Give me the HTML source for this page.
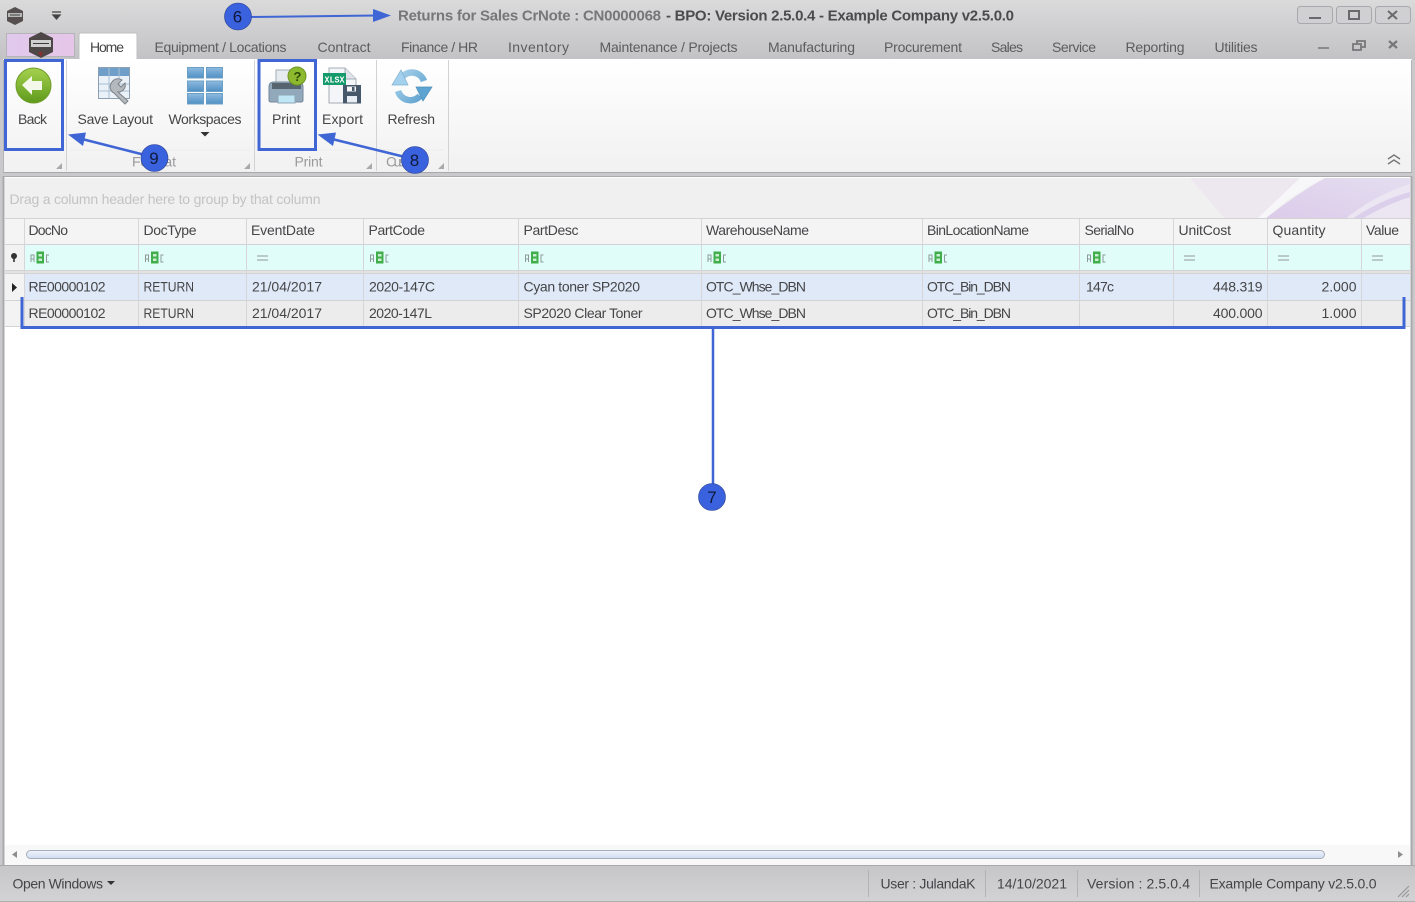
<!DOCTYPE html>
<html><head><meta charset="utf-8"><title>Returns for Sales CrNote</title>
<style>
html,body{margin:0;padding:0;background:#fff;width:1415px;height:902px;overflow:hidden}
svg{display:block;position:absolute;left:0;top:0;filter:blur(.35px)}
text{font-family:"Liberation Sans",sans-serif;font-size:14px;fill:#4a4a4c}
.t{fill:#5c5c5e}
.g{fill:#454548}
.m{fill:#9a9a9c}
.n{font-family:"Liberation Sans",sans-serif;font-size:17px;fill:#10193a;text-anchor:middle}
</style></head><body>
<svg width="1415" height="902" viewBox="0 0 1415 902" xmlns="http://www.w3.org/2000/svg">
<defs>
<linearGradient id="chrome" x1="0" y1="0" x2="0" y2="1"><stop offset="0" stop-color="#dadadb"/><stop offset="1" stop-color="#c2c2c5"/></linearGradient>
<linearGradient id="status" x1="0" y1="0" x2="0" y2="1"><stop offset="0" stop-color="#c6c6c9"/><stop offset="1" stop-color="#d3d3d5"/></linearGradient>
<linearGradient id="rib" x1="0" y1="0" x2="0" y2="1"><stop offset="0" stop-color="#ffffff"/><stop offset="1" stop-color="#f1f1f2"/></linearGradient>
<linearGradient id="app" x1="0" y1="0" x2="1" y2="0"><stop offset="0" stop-color="#e0c9ec"/><stop offset="1" stop-color="#e6c6e8"/></linearGradient>
<linearGradient id="gb" x1="0" y1="0" x2="0" y2="1"><stop offset="0" stop-color="#a5d24e"/><stop offset="1" stop-color="#5f9a1c"/></linearGradient>
<linearGradient id="blk" x1="0" y1="0" x2="0" y2="1"><stop offset="0" stop-color="#8fbbdf"/><stop offset="1" stop-color="#4f8fc4"/></linearGradient>
<linearGradient id="sb" x1="0" y1="0" x2="0" y2="1"><stop offset="0" stop-color="#f0f4fb"/><stop offset="1" stop-color="#cfdcf2"/></linearGradient>
<linearGradient id="ref" gradientUnits="userSpaceOnUse" x1="392" y1="70" x2="432" y2="102"><stop offset="0" stop-color="#b5dbf0"/><stop offset="1" stop-color="#4f97c9"/></linearGradient>
<linearGradient id="swoosh" x1="0" y1="1" x2="1" y2="0"><stop offset="0" stop-color="#dccbea"/><stop offset="1" stop-color="#e4def0"/></linearGradient>
</defs>

<!-- chrome -->
<rect width="1415" height="902" fill="#c9c9cc"/>
<rect width="1415" height="60" fill="url(#chrome)"/>

<!-- app icon -->
<path d="M15 7l8 4v10l-8 4-8-4V11z" fill="#55504f"/>
<rect x="8" y="13" width="14" height="4" fill="#b9b9b9"/>
<path d="M10 15h10" stroke="#3f3f3f"/>
<path d="M52 12h9M53 15h7l-3.500 4z" stroke="#444" stroke-width="1.300" fill="#444"/>

<!-- title -->
<text x="398" y="20.500" textLength="263" lengthAdjust="spacing" font-weight="bold" style="fill:#77777a;font-size:15px">Returns for Sales CrNote : CN0000068</text>
<text x="666" y="20.500" textLength="348" lengthAdjust="spacing" font-weight="bold" style="fill:#4b4b4e;font-size:15px">- BPO: Version 2.5.0.4 - Example Company v2.5.0.0</text>

<!-- window buttons -->
<g fill="#d0d0d2" stroke="#a9a9ad"><rect x="1297.500" y="6.500" width="35" height="17" rx="3"/><rect x="1336.500" y="6.500" width="35" height="17" rx="3"/><rect x="1375.500" y="6.500" width="35" height="17" rx="3"/></g>
<rect x="1309" y="17" width="12" height="2" fill="#6a6a6c"/>
<rect x="1349" y="11" width="10" height="8" fill="none" stroke="#6a6a6c" stroke-width="2"/>
<path d="M1388 11l9 8M1397 11l-9 8" stroke="#6a6a6c" stroke-width="2"/>

<!-- app button and tabs -->
<rect x="6.500" y="33.500" width="68" height="23" fill="url(#app)" stroke="#b5b5b9"/>
<path d="M41 32l12 6v14l-12 6-12-6V38z" fill="#4d4847"/>
<rect x="31" y="40" width="20" height="7" fill="#cfcfcf"/>
<path d="M33 43.500h16" stroke="#3b3b3b"/>
<path d="M38 52h5l-2 5z" fill="#8a2f2f"/>
<path d="M79 60V35q0-2 2-2h54q2 0 2 2v25z" fill="#fff" stroke="#c0c0c3"/>
<text class="g" x="90" y="52" textLength="34" lengthAdjust="spacing">Home</text>
<g class="tabs">
<text class="t" x="154.500" y="52" textLength="132" lengthAdjust="spacing">Equipment / Locations</text>
<text class="t" x="317.500" y="52" textLength="53" lengthAdjust="spacing">Contract</text>
<text class="t" x="401" y="52" textLength="77" lengthAdjust="spacing">Finance / HR</text>
<text class="t" x="508" y="52" textLength="61" lengthAdjust="spacing">Inventory</text>
<text class="t" x="599.500" y="52" textLength="138" lengthAdjust="spacing">Maintenance / Projects</text>
<text class="t" x="768" y="52" textLength="87" lengthAdjust="spacing">Manufacturing</text>
<text class="t" x="884" y="52" textLength="78" lengthAdjust="spacing">Procurement</text>
<text class="t" x="991" y="52" textLength="32" lengthAdjust="spacing">Sales</text>
<text class="t" x="1052" y="52" textLength="44" lengthAdjust="spacing">Service</text>
<text class="t" x="1125.500" y="52" textLength="59" lengthAdjust="spacing">Reporting</text>
<text class="t" x="1214.500" y="52" textLength="43" lengthAdjust="spacing">Utilities</text>
</g>
<rect x="1318" y="47" width="11" height="2" fill="#8b8b8e"/>
<path d="M1353 44h8v6h-8zM1357 44v-3h8v6h-4" fill="none" stroke="#77777a" stroke-width="1.800"/>
<path d="M1389 41l8 7M1397 41l-8 7" stroke="#77777a" stroke-width="2.200"/>

<!-- ribbon -->
<rect x="3" y="59" width="1409" height="113" fill="url(#rib)"/>
<rect x="79" y="59" width="57" height="2" fill="#fff"/>
<path d="M3 172.500H1412" stroke="#a9a9ac"/>
<path d="M3.500 60V172M1411.500 60V172" stroke="#b5b5b8"/>
<path d="M66.500 60V171M254.500 60V171M376.500 60V171M448.500 60V171" stroke="#d2d2d5"/>
<path d="M6 150H62M70 150H250M259 150H372M380 150H444" stroke="#ececee"/>

<!-- back icon -->
<circle cx="33.500" cy="85.500" r="17.500" fill="url(#gb)" stroke="#6f9c2a"/>
<path d="M22 85l10-9v5h10v9H32v5z" fill="#f4f8ea"/>

<!-- save layout icon -->
<rect x="98.500" y="67.500" width="31" height="31" fill="#eaf1f8" stroke="#8d9fb0"/>
<rect x="99" y="68" width="30" height="8" fill="#6f9fc8"/>
<path d="M109 68V98M119 68V98M99 84H129M99 91H129" stroke="#a8bfd3"/>
<path d="M112 82a7 7 0 0 1 10-2l-4 4 3 3 4-4a7 7 0 0 1-7 9l10 9-3 3-11-11a7 7 0 0 1-2-11z" fill="#b4b9be" stroke="#7d8389"/>

<!-- workspaces icon -->
<g fill="url(#blk)" stroke="#6c9fc6"><rect x="187.500" y="67.500" width="16" height="10.500"/><rect x="206.500" y="67.500" width="16" height="10.500"/><rect x="187.500" y="81" width="16" height="10.500"/><rect x="206.500" y="81" width="16" height="10.500"/><rect x="187.500" y="93.500" width="16" height="10.500"/><rect x="206.500" y="93.500" width="16" height="10.500"/></g>

<!-- print icon -->
<rect x="276" y="70" width="22" height="14" fill="#e6ebf0" stroke="#a3acb4"/>
<path d="M269 87q0-5 5-5h24q5 0 5 5v13q0 2-2 2h-30q-2 0-2-2z" fill="#92a8bb" stroke="#74879a"/>
<rect x="272" y="83" width="29" height="6" fill="#55646f"/>
<rect x="278" y="95" width="17" height="8" fill="#bfe6f4" stroke="#8ea6b6"/>
<circle cx="297" cy="76" r="9" fill="#8db92e" stroke="#6a9420"/>
<text x="293.500" y="81" font-weight="bold" style="fill:#2f4a08;font-size:13px">?</text>

<!-- export icon -->
<path d="M329 68h16l11 11v24h-27z" fill="#f3f5f8" stroke="#a5adb6"/>
<path d="M345 68v11h11" fill="#dfe4ea" stroke="#a5adb6"/>
<rect x="323" y="73" width="23" height="12" fill="#149a6b"/>
<text x="324.500" y="82.500" textLength="20" lengthAdjust="spacingAndGlyphs" font-weight="bold" style="fill:#fff;font-size:9px;font-family:'Liberation Mono',monospace">XLSX</text>
<rect x="343" y="85" width="18" height="18.500" fill="#46586a"/>
<rect x="347" y="86.500" width="9" height="5" fill="#f4f4f4"/>
<rect x="352" y="87" width="2.500" height="4" fill="#46586a"/>
<rect x="347" y="96" width="10" height="6.500" fill="#e8eef4"/>

<!-- refresh icon -->
<g fill="none" stroke="url(#ref)" stroke-width="6.500">
<path d="M402 77A13 13 0 0 1 424 81"/>
<path d="M420 96A13 13 0 0 1 398 91"/>
</g>
<path d="M392 85L401 70L408 85z" fill="#a3d0ec" stroke="#7fb0cf" stroke-width=".7"/>
<path d="M416 87L432 87L423 101z" fill="#5da4d2" stroke="#4d90bb" stroke-width=".7"/>

<!-- ribbon labels -->
<text class="g" x="18" y="124" textLength="29" lengthAdjust="spacing">Back</text>
<text class="g" x="77.500" y="124" textLength="75.500" lengthAdjust="spacing">Save Layout</text>
<text class="g" x="168.500" y="124" textLength="73" lengthAdjust="spacing">Workspaces</text>
<path d="M200.500 132h9l-4.500 4.500z" fill="#333"/>
<text class="g" x="272" y="124" textLength="28.500" lengthAdjust="spacing">Print</text>
<text class="g" x="322" y="124" textLength="41" lengthAdjust="spacing">Export</text>
<text class="g" x="387.500" y="124" textLength="47.500" lengthAdjust="spacing">Refresh</text>
<text class="m" x="132" y="166.500" textLength="44" lengthAdjust="spacing">Format</text>
<text class="m" x="294.500" y="166.500" textLength="28" lengthAdjust="spacing">Print</text>
<text class="m" x="386" y="166.500" textLength="36" lengthAdjust="spacing">Custom</text>
<path d="M62 163v6h-6zM250 163v6h-6zM372 163v6h-6zM444 163v6h-6z" fill="#a9a9ac"/>
<path d="M1388 159l6-4 6 4M1388 164l6-4 6 4" fill="none" stroke="#777" stroke-width="1.400"/>

<!-- grid frame -->
<rect x="4" y="176" width="1407" height="690" fill="#fff"/>
<path d="M3 176.500H1412" stroke="#aaaaad"/>
<path d="M3.500 176V866M1411.500 176V866" stroke="#a9a9ac" stroke-width="2"/>

<!-- group panel -->
<rect x="5" y="178" width="1405" height="41" fill="#f0f0f1"/>
<path d="M1190 178H1300L1257 219H1225z" fill="#ede8ef"/>
<path d="M1257 219L1300 178H1325Q1290 195 1265 219z" fill="#f7f6f8"/>
<path d="M1265 219Q1295 195 1325 178H1410V219z" fill="url(#swoosh)"/>
<path d="M1345 219Q1375 195 1410 184V219z" fill="#ebe6f2"/>
<path d="M1352 219Q1380 200 1410 192V197Q1385 205 1362 219z" fill="#dccfec"/>
<text x="9.500" y="204" textLength="311" lengthAdjust="spacing" style="fill:#c3c3c5">Drag a column header here to group by that column</text>

<!-- header / filter / rows -->
<rect x="5" y="219" width="1405" height="25" fill="#f4f4f5"/>
<rect x="5" y="244" width="19" height="26" fill="#f2f2f3"/>
<rect x="24" y="244" width="1386" height="26" fill="#e0fdf9"/>
<rect x="5" y="270" width="1405" height="4" fill="#e2e2e3"/>
<rect x="5" y="274" width="19" height="52" fill="#f3f3f4"/>
<rect x="24" y="274" width="1386" height="26" fill="#dfe9f7"/>
<rect x="24" y="300" width="1386" height="26" fill="#ececec"/>
<path d="M5 218.500H1410M5 244.500H1410M5 270.500H1410M5 273.500H1410M5 300.500H1410M5 326.500H1410" stroke="#d3d3d5"/>
<path d="M24.500 219V326M138.500 219V326M246.500 219V326M363.500 219V326M518.500 219V326M701.500 219V326M922.500 219V326M1079.500 219V326M1173.500 219V326M1267.500 219V326M1361.500 219V326" stroke="#d6d6d8"/>

<g>
<text class="g" x="28.500" y="235" textLength="39.500" lengthAdjust="spacing">DocNo</text>
<text class="g" x="143.500" y="235" textLength="53" lengthAdjust="spacing">DocType</text>
<text class="g" x="251" y="235" textLength="64" lengthAdjust="spacing">EventDate</text>
<text class="g" x="368.500" y="235" textLength="56.500" lengthAdjust="spacing">PartCode</text>
<text class="g" x="523.500" y="235" textLength="55" lengthAdjust="spacing">PartDesc</text>
<text class="g" x="706" y="235" textLength="103" lengthAdjust="spacing">WarehouseName</text>
<text class="g" x="927" y="235" textLength="102" lengthAdjust="spacing">BinLocationName</text>
<text class="g" x="1084.500" y="235" textLength="49.500" lengthAdjust="spacing">SerialNo</text>
<text class="g" x="1178.500" y="235" textLength="52.500" lengthAdjust="spacing">UnitCost</text>
<text class="g" x="1272.500" y="235" textLength="53" lengthAdjust="spacing">Quantity</text>
<text class="g" x="1366" y="235" textLength="33" lengthAdjust="spacing">Value</text>
</g>

<!-- filter icons -->
<circle cx="14" cy="256" r="3" fill="#333"/>
<path d="M14 256v6" stroke="#333" stroke-width="1.600"/>
<g fill="#3fae4b"><rect x="36.500" y="251.500" width="7.500" height="12"/><rect x="151" y="251.500" width="7.500" height="12"/><rect x="376" y="251.500" width="7.500" height="12"/><rect x="531" y="251.500" width="7.500" height="12"/><rect x="713.500" y="251.500" width="7.500" height="12"/><rect x="934.500" y="251.500" width="7.500" height="12"/><rect x="1093" y="251.500" width="7.500" height="12"/></g>
<g fill="#cdeed2"><rect x="38.500" y="254" width="3.500" height="2.500"/><rect x="38.500" y="258.500" width="3.500" height="2.500"/><rect x="153" y="254" width="3.500" height="2.500"/><rect x="153" y="258.500" width="3.500" height="2.500"/><rect x="378" y="254" width="3.500" height="2.500"/><rect x="378" y="258.500" width="3.500" height="2.500"/><rect x="533" y="254" width="3.500" height="2.500"/><rect x="533" y="258.500" width="3.500" height="2.500"/><rect x="715.500" y="254" width="3.500" height="2.500"/><rect x="715.500" y="258.500" width="3.500" height="2.500"/><rect x="936.500" y="254" width="3.500" height="2.500"/><rect x="936.500" y="258.500" width="3.500" height="2.500"/><rect x="1095" y="254" width="3.500" height="2.500"/><rect x="1095" y="258.500" width="3.500" height="2.500"/></g>
<g fill="none" stroke="#8d9a98" stroke-width="1"><path d="M31 262v-7h3v7M31 259h3M49 255h-2.500v7H49"/><path d="M145.500 262v-7h3v7M145.500 259h3M163.500 255H161v7h2.500"/><path d="M370.500 262v-7h3v7M370.500 259h3M388.500 255H386v7h2.500"/><path d="M525.500 262v-7h3v7M525.500 259h3M543.500 255H541v7h2.500"/><path d="M708 262v-7h3v7M708 259h3M726 255h-2.500v7h2.500"/><path d="M929 262v-7h3v7M929 259h3M947 255h-2.500v7h2.500"/><path d="M1087.500 262v-7h3v7M1087.500 259h3M1105.500 255H1103v7h2.500"/></g>
<path d="M257 256h11M257 260h11M1184 256h11M1184 260h11M1278 256h11M1278 260h11M1372 256h11M1372 260h11" stroke="#a3abaa" stroke-width="1.200"/>

<!-- rows -->
<path d="M12 283l5 4.500-5 4.500z" fill="#222"/>
<g>
<text class="g" x="28.500" y="291.500" textLength="77" lengthAdjust="spacing">RE00000102</text>
<text class="g" x="143.500" y="291.500" textLength="50.500" lengthAdjust="spacingAndGlyphs">RETURN</text>
<text class="g" x="252" y="291.500" textLength="70" lengthAdjust="spacing">21/04/2017</text>
<text class="g" x="369" y="291.500" textLength="66" lengthAdjust="spacing">2020-147C</text>
<text class="g" x="523.500" y="291.500" textLength="116.500" lengthAdjust="spacing">Cyan toner SP2020</text>
<text class="g" x="706" y="291.500" textLength="100" lengthAdjust="spacing">OTC_Whse_DBN</text>
<text class="g" x="927" y="291.500" textLength="84" lengthAdjust="spacing">OTC_Bin_DBN</text>
<text class="g" x="1086" y="291.500" textLength="28" lengthAdjust="spacing">147c</text>
<text class="g" x="1213" y="291.500" textLength="49.500" lengthAdjust="spacing">448.319</text>
<text class="g" x="1321.500" y="291.500" textLength="35" lengthAdjust="spacing">2.000</text>

<text class="g" x="28.500" y="318" textLength="77" lengthAdjust="spacing">RE00000102</text>
<text class="g" x="143.500" y="318" textLength="50.500" lengthAdjust="spacingAndGlyphs">RETURN</text>
<text class="g" x="252" y="318" textLength="70" lengthAdjust="spacing">21/04/2017</text>
<text class="g" x="369" y="318" textLength="63" lengthAdjust="spacing">2020-147L</text>
<text class="g" x="523.500" y="318" textLength="119" lengthAdjust="spacing">SP2020 Clear Toner</text>
<text class="g" x="706" y="318" textLength="100" lengthAdjust="spacing">OTC_Whse_DBN</text>
<text class="g" x="927" y="318" textLength="84" lengthAdjust="spacing">OTC_Bin_DBN</text>
<text class="g" x="1213" y="318" textLength="49.500" lengthAdjust="spacing">400.000</text>
<text class="g" x="1321.500" y="318" textLength="35" lengthAdjust="spacing">1.000</text>
</g>

<!-- scrollbar -->
<rect x="5" y="845" width="1405" height="20" fill="#f8f8f9"/>
<path d="M17 851v7l-5-3.500z" fill="#8e8e90"/>
<path d="M1398 851v7l5-3.500z" fill="#8e8e90"/>
<rect x="26.500" y="850.500" width="1298" height="8" rx="4" fill="url(#sb)" stroke="#a6adba"/>

<!-- status bar -->
<rect x="0" y="866" width="1415" height="36" fill="url(#status)"/>
<path d="M0 865.500H1415" stroke="#a9a9ac"/>
<path d="M0 901.500H1415" stroke="#b0b0b3"/>
<text class="g" x="12.500" y="888.500" textLength="90.500" lengthAdjust="spacing">Open Windows</text>
<path d="M107 881h8l-4 4z" fill="#333"/>
<path d="M868.500 870V897M985.500 870V897M1077.500 870V897M1199.500 870V897" stroke="#b3b3b6"/>
<text class="g" x="880.500" y="888.500" textLength="95" lengthAdjust="spacing">User : JulandaK</text>
<text class="g" x="997" y="888.500" textLength="70" lengthAdjust="spacing">14/10/2021</text>
<text class="g" x="1087" y="888.500" textLength="103" lengthAdjust="spacing">Version : 2.5.0.4</text>
<text class="g" x="1209.500" y="888.500" textLength="167" lengthAdjust="spacing">Example Company v2.5.0.0</text>
<path d="M1398 897l11-11M1402 897l7-7M1406 897l3-3" stroke="#98989b" stroke-width="1.200"/>

<!-- annotations -->
<g fill="none" stroke="#3f66d4" stroke-width="3">
<rect x="5.500" y="60.500" width="57" height="89"/>
<rect x="259" y="60.500" width="56.500" height="89"/>
<path d="M22 297V327.500H1404V297"/>
</g>
<path d="M713 328V485" stroke="#3f66d4" stroke-width="2.500"/>
<path d="M250 17L376 15.500" stroke="#3f66d4" stroke-width="2"/>
<path d="M391 15.500L373 9v13z" fill="#3f66d4"/>
<path d="M145 155L82 139" stroke="#3f66d4" stroke-width="2.500"/>
<path d="M68 134.500L86 132.500 83 146z" fill="#3f66d4"/>
<path d="M405 157L332 139" stroke="#3f66d4" stroke-width="2.500"/>
<path d="M317.500 134.500L336 132.500 333 146z" fill="#3f66d4"/>
<g fill="#3a62de" stroke="#2a3f8a" stroke-width="0.600">
<circle cx="238" cy="16.500" r="13.500"/><circle cx="154.500" cy="158" r="13.500"/><circle cx="415" cy="160" r="13.500"/><circle cx="712" cy="497" r="13.500"/>
</g>
<text class="n" x="237.500" y="22.500">6</text>
<text class="n" x="154" y="164">9</text>
<text class="n" x="414.500" y="166">8</text>
<text class="n" x="712" y="503">7</text>
</svg>
</body></html>
